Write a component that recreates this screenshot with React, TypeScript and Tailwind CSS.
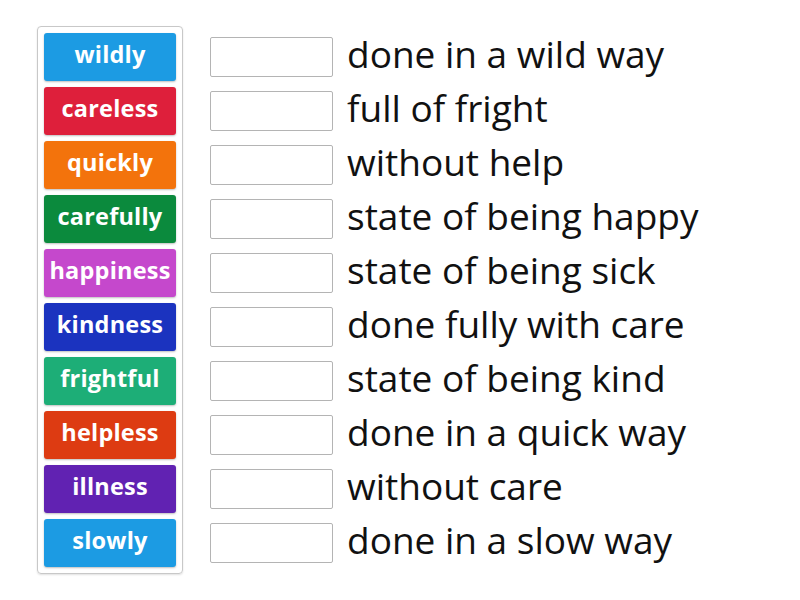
import React from "react";

const tiles: { label: string; color: string }[] = [
  { label: "wildly", color: "bg-[#1c9be3]" },
  { label: "careless", color: "bg-[#de1f3b]" },
  { label: "quickly", color: "bg-[#f3730c]" },
  { label: "carefully", color: "bg-[#0b8a3d]" },
  { label: "happiness", color: "bg-[#c548cc]" },
  { label: "kindness", color: "bg-[#1b33bf]" },
  { label: "frightful", color: "bg-[#1dae77]" },
  { label: "helpless", color: "bg-[#dd3b12]" },
  { label: "illness", color: "bg-[#6122b2]" },
  { label: "slowly", color: "bg-[#1c9be3]" },
];

const defs = [
  "done in a wild way",
  "full of fright",
  "without help",
  "state of being happy",
  "state of being sick",
  "done fully with care",
  "state of being kind",
  "done in a quick way",
  "without care",
  "done in a slow way",
];

export default function App() {
  return (
    <div
      className="w-[800px] h-[600px] bg-white flex items-start"
      style={{ fontFamily: '"Open Sans", "Noto Sans", sans-serif' }}
    >
      <div className="ml-[37px] mt-[26px] w-[146px] border border-[#c8c8c8] rounded-[4px] p-[6px] flex flex-col gap-[6px] shadow-[0_1px_2px_rgba(0,0,0,0.12)]">
        {tiles.map((t) => (
          <div
            key={t.label}
            className={`${t.color} h-[48px] rounded-[3px] flex items-center justify-center text-white font-bold text-[23.5px] tracking-[0.2px] pb-[4px] shadow-[0_1px_2px_rgba(0,0,0,0.25)]`}
          >
            {t.label}
          </div>
        ))}
      </div>
      <div className="ml-[27px] mt-[30px] flex flex-col">
        {defs.map((d) => (
          <div key={d} className="h-[54px] flex items-center">
            <div className="w-[123px] h-[40px] border border-[#b4b4b4] rounded-[2px] bg-white shrink-0" />
            <div className="ml-[14px] text-[37px] leading-none text-[#111] whitespace-nowrap -mt-[8px]">
              {d}
            </div>
          </div>
        ))}
      </div>
    </div>
  );
}
